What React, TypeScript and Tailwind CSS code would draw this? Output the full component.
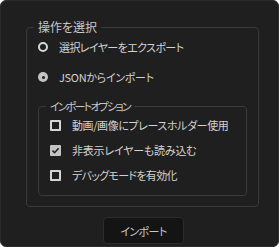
export default function App() {
  const font = "font-['Noto_Sans_CJK_JP','Noto_Sans',sans-serif] [font-feature-settings:'palt']";

  return (
    <div className={`w-[279px] h-[247px] overflow-hidden bg-[#1f1f1f] border border-[#2b2b2b] rounded-[6px] text-[11px] leading-[16px] text-[#d2d2d2] whitespace-nowrap ${font}`}>
      <fieldset className="mt-[18px] ml-[25px] w-[233px] border border-[#3a3a3a] rounded-[4px] px-[11px] pb-[10px]">
        <legend className="ml-[-4px] px-[4px] text-[12px] text-[#c8c8c8]">操作を選択</legend>

        <div className="mt-[2px] flex h-[20px] items-center gap-[11px]">
          <span className="w-[10px] h-[10px] rounded-full border-2 border-[#d6d6d6] bg-[#1f1f1f]" />
          <span className="tracking-[-0.6px]">選択レイヤーをエクスポート</span>
        </div>

        <div className="mt-[10px] flex h-[20px] items-center gap-[11px]">
          <span className="flex w-[10px] h-[10px] items-center justify-center rounded-full bg-[#c4c4c4]">
            <span className="w-[3px] h-[3px] rounded-full bg-[#1f1f1f]" />
          </span>
          <span className="tracking-[-0.3px]">JSONからインポート</span>
        </div>

        <fieldset className="mt-[11px] w-[209px] border border-[#3a3a3a] rounded-[4px] px-[11px] pb-[10px]">
          <legend className="ml-[-4px] px-[4px] tracking-[-1.8px] text-[#c8c8c8]">インポートオプション</legend>

          <div className="mt-[1px] flex flex-col gap-[5px]">
            <div className="flex h-[20px] items-center gap-[11px]">
              <span className="w-[11px] h-[11px] rounded-[1px] border-2 border-[#d6d6d6] bg-[#1f1f1f]" />
              <span className="tracking-[-0.4px]">動画/画像にプレースホルダー使用</span>
            </div>
            <div className="flex h-[20px] items-center gap-[11px]">
              <span className="flex w-[11px] h-[11px] items-center justify-center rounded-[1px] bg-[#c4c4c4]">
                <svg width="9" height="9" viewBox="0 0 9 9" fill="none">
                  <path d="M1.5 4.6 L3.6 6.7 L7.6 2.3" stroke="#1f1f1f" strokeWidth="1.6" />
                </svg>
              </span>
              <span className="tracking-[-0.2px]">非表示レイヤーも読み込む</span>
            </div>
            <div className="flex h-[20px] items-center gap-[11px]">
              <span className="w-[11px] h-[11px] rounded-[1px] border-2 border-[#d6d6d6] bg-[#1f1f1f]" />
              <span className="tracking-[-0.7px]">デバッグモードを有効化</span>
            </div>
          </div>
        </fieldset>
      </fieldset>

      <button className="mt-[10px] ml-[102px] flex w-[81px] h-[27px] items-center justify-center rounded-[4px] border border-[#2c2c2c] bg-[#141414] tracking-[-0.6px] text-[#c8c8c8]">
        インポート
      </button>
    </div>
  );
}
